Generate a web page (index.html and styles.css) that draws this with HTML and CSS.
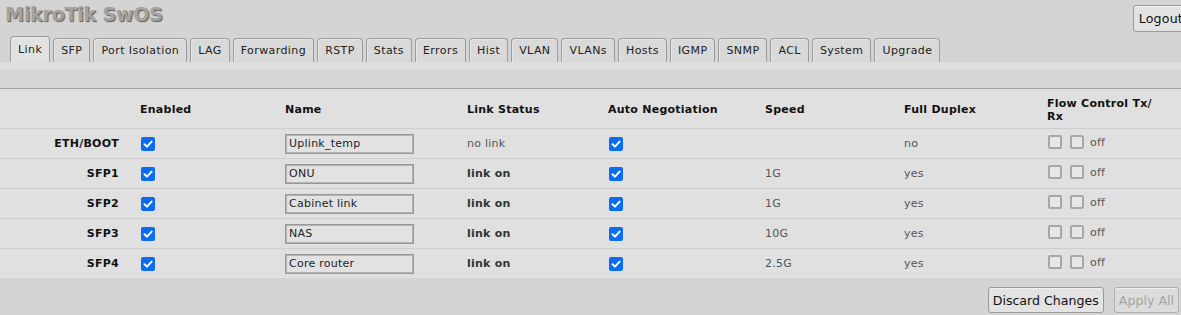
FILE: index.html
```html
<!DOCTYPE html>
<html lang="en">
<head>
<meta charset="utf-8">
<title>MikroTik SwOS</title>
<link rel="stylesheet" href="styles.css">
</head>
<body>
<header class="topbar">
  <h1 class="brand">MikroTik SwOS</h1>
  <button class="btn logout">Logout</button>
</header>
<nav class="tabs">
  <a class="tab active">Link</a>
  <a class="tab">SFP</a>
  <a class="tab">Port Isolation</a>
  <a class="tab">LAG</a>
  <a class="tab">Forwarding</a>
  <a class="tab">RSTP</a>
  <a class="tab">Stats</a>
  <a class="tab">Errors</a>
  <a class="tab">Hist</a>
  <a class="tab">VLAN</a>
  <a class="tab">VLANs</a>
  <a class="tab">Hosts</a>
  <a class="tab">IGMP</a>
  <a class="tab">SNMP</a>
  <a class="tab">ACL</a>
  <a class="tab">System</a>
  <a class="tab">Upgrade</a>
</nav>
<div class="band-light"></div>
<div class="band-dark"></div>
<table class="grid">
  <colgroup>
    <col class="c-port"><col class="c-en"><col class="c-name"><col class="c-status"><col class="c-auto"><col class="c-speed"><col class="c-dup"><col class="c-flow">
  </colgroup>
  <thead>
    <tr>
      <th></th>
      <th>Enabled</th>
      <th>Name</th>
      <th>Link Status</th>
      <th>Auto Negotiation</th>
      <th>Speed</th>
      <th>Full Duplex</th>
      <th class="flow-h">Flow Control Tx/ Rx</th>
    </tr>
  </thead>
  <tbody>
    <tr>
      <td class="port">ETH/BOOT</td>
      <td><span class="cb on"><svg viewBox="0 0 14 14"><path d="M3.5 7.2 L6 9.6 L10.6 4.6"/></svg></span></td>
      <td><input class="name" type="text" value="Uplink_temp"></td>
      <td class="muted">no link</td>
      <td><span class="cb on"><svg viewBox="0 0 14 14"><path d="M3.5 7.2 L6 9.6 L10.6 4.6"/></svg></span></td>
      <td class="muted"></td>
      <td class="muted">no</td>
      <td><span class="flow"><span class="cb off"></span><span class="cb off"></span><span class="muted off-t">off</span></span></td>
    </tr>
    <tr>
      <td class="port">SFP1</td>
      <td><span class="cb on"><svg viewBox="0 0 14 14"><path d="M3.5 7.2 L6 9.6 L10.6 4.6"/></svg></span></td>
      <td><input class="name" type="text" value="ONU"></td>
      <td class="strong">link on</td>
      <td><span class="cb on"><svg viewBox="0 0 14 14"><path d="M3.5 7.2 L6 9.6 L10.6 4.6"/></svg></span></td>
      <td class="muted">1G</td>
      <td class="muted">yes</td>
      <td><span class="flow"><span class="cb off"></span><span class="cb off"></span><span class="muted off-t">off</span></span></td>
    </tr>
    <tr>
      <td class="port">SFP2</td>
      <td><span class="cb on"><svg viewBox="0 0 14 14"><path d="M3.5 7.2 L6 9.6 L10.6 4.6"/></svg></span></td>
      <td><input class="name" type="text" value="Cabinet link"></td>
      <td class="strong">link on</td>
      <td><span class="cb on"><svg viewBox="0 0 14 14"><path d="M3.5 7.2 L6 9.6 L10.6 4.6"/></svg></span></td>
      <td class="muted">1G</td>
      <td class="muted">yes</td>
      <td><span class="flow"><span class="cb off"></span><span class="cb off"></span><span class="muted off-t">off</span></span></td>
    </tr>
    <tr>
      <td class="port">SFP3</td>
      <td><span class="cb on"><svg viewBox="0 0 14 14"><path d="M3.5 7.2 L6 9.6 L10.6 4.6"/></svg></span></td>
      <td><input class="name" type="text" value="NAS"></td>
      <td class="strong">link on</td>
      <td><span class="cb on"><svg viewBox="0 0 14 14"><path d="M3.5 7.2 L6 9.6 L10.6 4.6"/></svg></span></td>
      <td class="muted">10G</td>
      <td class="muted">yes</td>
      <td><span class="flow"><span class="cb off"></span><span class="cb off"></span><span class="muted off-t">off</span></span></td>
    </tr>
    <tr>
      <td class="port">SFP4</td>
      <td><span class="cb on"><svg viewBox="0 0 14 14"><path d="M3.5 7.2 L6 9.6 L10.6 4.6"/></svg></span></td>
      <td><input class="name" type="text" value="Core router"></td>
      <td class="strong">link on</td>
      <td><span class="cb on"><svg viewBox="0 0 14 14"><path d="M3.5 7.2 L6 9.6 L10.6 4.6"/></svg></span></td>
      <td class="muted">2.5G</td>
      <td class="muted">yes</td>
      <td><span class="flow"><span class="cb off"></span><span class="cb off"></span><span class="muted off-t">off</span></span></td>
    </tr>
  </tbody>
</table>
<footer class="actions">
  <button class="btn">Discard Changes</button>
  <button class="btn" disabled>Apply All</button>
</footer>
</body>
</html>
```
FILE: styles.css
```css
html, body {
  margin: 0;
  padding: 0;
  overflow: hidden;
}
body {
  background: #d4d4d4;
  font-family: "DejaVu Sans", Verdana, sans-serif;
  font-size: 11px;
  letter-spacing: 0.25px;
  color: #222;
  width: 1181px;
}
.topbar {
  display: flex;
  justify-content: space-between;
  align-items: flex-start;
  height: 37px;
}
.brand {
  margin: 0;
  padding: 1px 0 0 5px;
  font-size: 19px;
  line-height: 26px;
  font-weight: bold;
  color: #a3a3a3;
  text-shadow: 1px 1px 1px #5a5a5a;
  letter-spacing: -0.2px;
}
.btn {
  font-family: "DejaVu Sans", Verdana, sans-serif;
  font-size: 12.6px;
  letter-spacing: 0;
  color: #111;
  background: #e3e3e3;
  border: 1px solid #9a9a9a;
  border-radius: 3px;
  height: 26px;
  padding: 0 4px;
  box-shadow: inset 0 1px 0 #f2f2f2;
}
.btn:disabled {
  color: #a5a5a5;
  border-color: #b0b0b0;
  background: #dcdcdc;
}
.logout {
  margin-top: 5px;
  margin-right: -8px;
  height: 27px;
  padding: 0 5px;
  letter-spacing: 0.2px;
}
.tabs {
  display: flex;
  align-items: flex-end;
  gap: 3px;
  padding-left: 10px;
  height: 25px;
}
.tab {
  display: block;
  height: 23px;
  line-height: 23px;
  padding: 0 7px;
  border: 1px solid #9c9c9c;
  border-bottom: none;
  border-radius: 4px 4px 0 0;
  background: #d9d9d9;
  box-shadow: inset 1px 1px 0 #e6e6e6;
  color: #222;
  white-space: nowrap;
  letter-spacing: 0.42px;
}
.tab.active {
  height: 25px;
  line-height: 26px;
  background: #e2e2e2;
}
.band-light {
  height: 8px;
  background: #dedede;
}
.band-dark {
  height: 18px;
  background: #d6d6d6;
  border-bottom: 1px solid #a4a4a4;
}
.grid {
  width: 1181px;
  table-layout: fixed;
  border-collapse: collapse;
  background: #e0e0e0;
}
.c-port { width: 140px; }
.c-en { width: 145px; }
.c-name { width: 182px; }
.c-status { width: 141px; }
.c-auto { width: 157px; }
.c-speed { width: 139px; }
.c-dup { width: 143px; }
.c-flow { width: 134px; }
.grid th {
  height: 37px;
  padding: 2px 0 0 0;
  text-align: left;
  font-weight: bold;
  color: #111;
  border-bottom: 1px solid #cfcfcf;
  vertical-align: middle;
}
.grid th.flow-h {
  padding-right: 14px;
  line-height: 13px;
}
.grid td {
  height: 29px;
  padding: 0;
  border-bottom: 1px solid #cfcfcf;
  vertical-align: middle;
  color: #555;
}
.grid tbody tr:last-child td {
  border-bottom: none;
}
.grid td.port {
  text-align: right;
  padding-right: 21px;
  font-weight: bold;
  color: #111;
}
.grid td.strong {
  font-weight: bold;
  color: #333;
}
.grid td.muted, .muted {
  color: #555;
}
.cb {
  display: inline-block;
  width: 14px;
  height: 14px;
  box-sizing: border-box;
  border-radius: 2px;
  vertical-align: middle;
}
.cb.on {
  background: #0b6cf1;
  margin-left: 1px;
}
.cb.on svg {
  display: block;
  width: 14px;
  height: 14px;
}
.cb.on path {
  fill: none;
  stroke: #fff;
  stroke-width: 2;
  stroke-linecap: round;
  stroke-linejoin: round;
}
.cb.off {
  border: 2px solid #a8a8a8;
  background: #e7e7e7;
}
.flow {
  display: inline-flex;
  align-items: center;
  gap: 8px;
  margin-left: 1px;
}
.off-t {
  margin-left: -2px;
}
.name {
  box-sizing: border-box;
  width: 129px;
  height: 20px;
  margin: 0;
  padding: 0 3px;
  border: 1px solid #989898;
  outline: 1px solid #b4b4b4;
  outline-offset: -2px;
  background: #e2e2e2;
  font-family: "DejaVu Sans", Verdana, sans-serif;
  font-size: 11px;
  letter-spacing: 0.25px;
  color: #222;
  vertical-align: middle;
}
.actions {
  display: flex;
  justify-content: flex-end;
  gap: 10px;
  padding: 9px 2px 0 0;
}
```
